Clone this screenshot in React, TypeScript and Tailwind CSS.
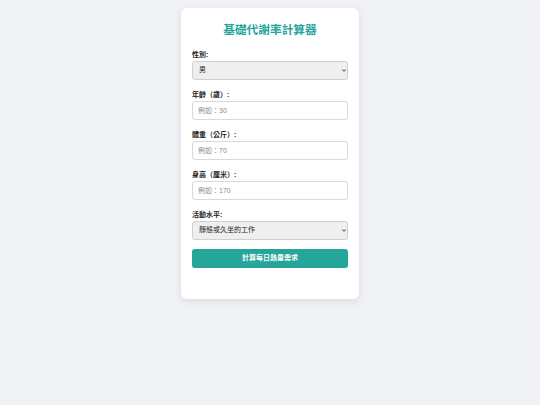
import React, { useState } from "react";

const activityOptions = [
  { value: "1.2", label: "靜態或久坐的工作" },
  { value: "1.375", label: "輕度活動（每週運動1-3天）" },
  { value: "1.55", label: "中度活動（每週運動3-5天）" },
  { value: "1.725", label: "高度活動（每週運動6-7天）" },
];

const font = { fontFamily: '"Liberation Sans", "Noto Sans CJK TC", sans-serif' };

const Chevron = () => (
  <svg className="pointer-events-none absolute right-[2px] top-[8px]" width="4" height="3" viewBox="0 0 4 3">
    <path d="M0.3 0.4 L2 2.3 L3.7 0.4" fill="none" stroke="#333" strokeWidth="0.9" />
  </svg>
);

export default function App() {
  const [form, setForm] = useState({ gender: "male", age: "", weight: "", height: "", activity: "1.2" });

  const handleChange = (name: keyof typeof form, value: string) => {
    setForm((prev) => ({ ...prev, [name]: value }));
  };

  const labelClass = "block text-[7px] leading-[9px] font-bold text-[#222] mb-[2px]";
  const inputClass =
    "block w-full h-[19px] px-[5px] text-[7px] bg-white border border-[#d9d9d9] rounded-[3px] outline-none placeholder:text-[#8a8a8a]";
  const selectClass =
    "block w-full h-[19px] pl-[6px] pr-[8px] text-[7px] text-[#222] bg-[#efefef] border border-[#d0d0d0] rounded-[3px] outline-none appearance-none";

  return (
    <div className="min-h-[405px] w-full bg-[#f0f2f5] pt-[8px]" style={font}>
      <div className="mx-auto w-[178px] h-[291px] bg-white rounded-[6px] shadow-[0_2px_8px_rgba(0,0,0,0.1)] px-[11px] pt-[14px]">
        <h1 className="text-center text-[11.7px] leading-[16px] font-bold text-[#26a69a] mb-[12px]">
          基礎代謝率計算器
        </h1>
        <form onSubmit={(e) => e.preventDefault()} className="flex flex-col gap-[10px]">
          <div>
            <label className={labelClass}>性別:</label>
            <div className="relative">
              <select className={selectClass} value={form.gender} onChange={(e) => handleChange("gender", e.target.value)}>
                <option value="male">男</option>
                <option value="female">女</option>
              </select>
              <Chevron />
            </div>
          </div>
          <div>
            <label className={labelClass}>年齡（歲）:</label>
            <input type="number" className={inputClass} placeholder="例如：30" value={form.age} onChange={(e) => handleChange("age", e.target.value)} />
          </div>
          <div>
            <label className={labelClass}>體重（公斤）:</label>
            <input type="number" className={inputClass} placeholder="例如：70" value={form.weight} onChange={(e) => handleChange("weight", e.target.value)} />
          </div>
          <div>
            <label className={labelClass}>身高（厘米）:</label>
            <input type="number" className={inputClass} placeholder="例如：170" value={form.height} onChange={(e) => handleChange("height", e.target.value)} />
          </div>
          <div>
            <label className={labelClass}>活動水平:</label>
            <div className="relative">
              <select className={selectClass} value={form.activity} onChange={(e) => handleChange("activity", e.target.value)}>
                {activityOptions.map((o) => (
                  <option key={o.value} value={o.value}>{o.label}</option>
                ))}
              </select>
              <Chevron />
            </div>
          </div>
          <button
            type="submit"
            className="-mt-[1px] h-[19px] w-full rounded-[3px] bg-[#26a69a] text-white text-[7px] font-bold"
          >
            計算每日熱量需求
          </button>
        </form>
      </div>
    </div>
  );
}
